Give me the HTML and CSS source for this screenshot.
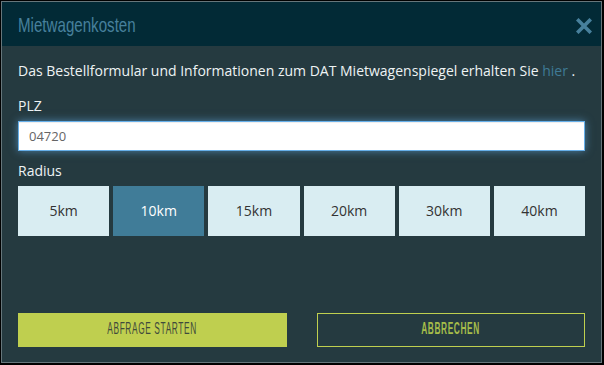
FILE: index.html
```html
<!DOCTYPE html>
<html lang="de">
<head>
    <meta charset="UTF-8">
    <meta name="viewport" content="width=device-width, initial-scale=1.0">
    <title>Mietwagenkosten</title>
    <link rel="stylesheet" href="styles.css">
</head>
<body>

    <div class="dialog">
        <div class="dialog-header">
            <h1><span class="narrow">Mietwagenkosten</span></h1>
            <button class="close" aria-label="Schließen">
                <svg width="16" height="16" viewBox="0 0 16 16">
                    <path d="M2.5 2.5 L13.5 13.5 M13.5 2.5 L2.5 13.5" stroke="#47809c" stroke-width="3.6" stroke-linecap="square"/>
                </svg>
            </button>
        </div>

        <div class="dialog-body">
            <p class="intro">Das Bestellformular und Informationen zum DAT Mietwagenspiegel erhalten Sie <a href="#">hier</a> .</p>

            <label for="plz">PLZ</label>
            <div class="input-wrap">
                <input type="text" id="plz" value="04720">
            </div>

            <label>Radius</label>
            <div class="radius">
                <button>5km</button>
                <button class="active">10km</button>
                <button>15km</button>
                <button>20km</button>
                <button>30km</button>
                <button>40km</button>
            </div>

            <div class="actions">
                <button class="btn-start"><span class="narrow">ABFRAGE STARTEN</span></button>
                <button class="btn-cancel"><span class="narrow">ABBRECHEN</span></button>
            </div>
        </div>
    </div>

</body>
</html>
```

FILE: styles.css
```css
html, body {
    height: 100%;
}
body {
    margin: 0;
    padding: 1px 2px 2px 1px;
    box-sizing: border-box;
    background-color: #000;
    font-family: "Open Sans", Arial, sans-serif;
    font-size: 14px;
    color: #eef3f4;
}
.dialog {
    height: 100%;
    box-sizing: border-box;
    border: 1px solid #66767b;
    background-color: #253a40;
    display: flex;
    flex-direction: column;
}
/* condensed display face is not installed, so squeeze Liberation Sans */
.narrow {
    display: inline-block;
    font-family: "Liberation Sans", Arial, sans-serif;
    transform: scaleX(0.72);
    transform-origin: left center;
    white-space: nowrap;
}
.dialog-header {
    height: 44px;
    flex-shrink: 0;
    background-color: #022a36;
    display: flex;
    align-items: center;
    justify-content: space-between;
    padding: 0 9px 0 16px;
}
.dialog-header h1 {
    margin: 0;
    font-weight: normal;
    font-size: 21px;
    line-height: 24px;
    color: #47809c;
}
.close {
    background: none;
    border: none;
    padding: 0;
    margin-top: 4px;
    width: 16px;
    height: 16px;
    cursor: pointer;
}
.close svg {
    display: block;
}
.dialog-body {
    flex: 1;
    display: flex;
    flex-direction: column;
    padding: 15px 16px 15px 16px;
}
.intro {
    margin: 0 0 15px 0;
    line-height: 20px;
}
.intro a {
    color: #3f7a96;
    text-decoration: none;
}
label {
    display: block;
    line-height: 20px;
}
.input-wrap {
    margin: 5px 0 10px 0;
}
#plz {
    display: block;
    width: 100%;
    height: 30px;
    box-sizing: border-box;
    border: 1px solid #66afe9;
    padding: 0 10px;
    font-family: "Open Sans", Arial, sans-serif;
    font-size: 13px;
    color: #666;
    background: #fff;
    outline: none;
    box-shadow: inset 0 1px 1px rgba(0, 0, 0, 0.075), 0 0 8px rgba(102, 175, 233, 0.6);
}
.radius {
    display: flex;
    gap: 4px;
    margin-top: 5px;
}
.radius button {
    flex: 1;
    height: 50px;
    padding: 0 0 2px 0;
    border: none;
    background-color: #d9edf2;
    color: #333;
    font-family: "Open Sans", Arial, sans-serif;
    font-size: 14px;
    cursor: pointer;
}
.radius button.active {
    background-color: #407c98;
    color: #fff;
}
.actions {
    margin-top: auto;
    display: grid;
    grid-template-columns: 1fr 1fr;
    gap: 30px;
}
.actions button {
    height: 34px;
    padding: 0 0 3px 0;
    font-size: 16px;
    letter-spacing: 1.2px;
    cursor: pointer;
}
.actions .narrow {
    transform: scaleX(0.52);
    transform-origin: center center;
}
.btn-start {
    background-color: #bfcf4f;
    border: none;
    color: #3f4a3c;
}
.btn-cancel {
    background: transparent;
    border: 1px solid #bfcf4f;
    color: #a6bd4a;
    font-weight: bold;
}
```
